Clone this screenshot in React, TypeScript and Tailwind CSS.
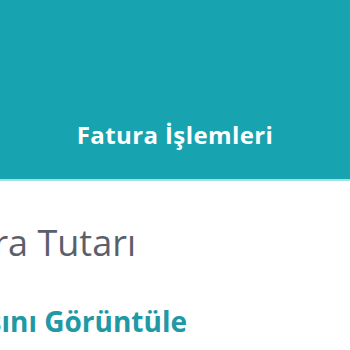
export default function App() {
  return (
    <div className="w-[350px] h-[350px] overflow-hidden bg-white" style={{ fontFamily: "'Open Sans', 'Noto Sans', sans-serif" }}>
      <header className="h-[181px] bg-[#17a3af] border-b-2 border-[#a8dfe3] flex items-end justify-center pb-[28px]">
        <h1 className="text-[24px] leading-[32px] font-bold text-white tracking-[0.4px]">Fatura İşlemleri</h1>
      </header>

      <div className="flex flex-col pt-[40px]">
        <div className="flex justify-end w-[136px] whitespace-nowrap">
          <span className="text-[36px] leading-[44px] text-[#5b5f6a]">Fatura Tutarı</span>
        </div>
        <div className="flex justify-end w-[187px] whitespace-nowrap mt-[38px]">
          <span className="text-[28px] leading-[36px] font-bold text-[#2199a5]">Faturasını Görüntüle</span>
        </div>
      </div>
    </div>
  );
}
